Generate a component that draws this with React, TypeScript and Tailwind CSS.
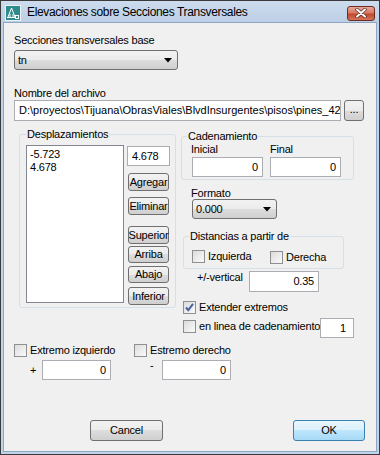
import React from "react";

const face =
  "flex items-center border border-[#707070] rounded-[3px] bg-[linear-gradient(to_bottom,#f2f2f2_0%,#ebebeb_50%,#dddddd_50%,#cfcfcf_100%)] whitespace-nowrap";
const btn = `${face} justify-center`;

const input = "border border-[#abadb3] bg-white h-[20px] leading-[18px] whitespace-nowrap overflow-hidden";

function Check({ checked = false }: { checked?: boolean }) {
  return (
    <span className="relative flex h-[13px] w-[13px] shrink-0 items-center justify-center border border-[#8e8f8f] bg-[linear-gradient(135deg,#dcdcdc_0%,#fafafa_100%)]">
      {checked && (
        <svg width="11" height="11" viewBox="0 0 11 11" className="absolute left-[0px] top-[0px]">
          <path d="M2 5.5 L4.3 8.2 L9 1.8" fill="none" stroke="#4c61a0" strokeWidth="2" />
        </svg>
      )}
    </span>
  );
}

function Combo({ value, w }: { value: string; w: string }) {
  return (
    <div className={`${face} ${w} h-[20px] justify-between pl-[3px] pr-[5px]`}>
      <span>{value}</span>
      <svg width="8" height="5" viewBox="0 0 8 5">
        <path d="M0 0 H8 L4 4.5 Z" fill="#000" />
      </svg>
    </div>
  );
}

function AppIcon() {
  return (
    <svg width="16" height="16" viewBox="0 0 16 16">
      <rect x="0.5" y="0.5" width="15" height="15" fill="#2d8b8b" stroke="#e8f2f2" />
      <path d="M3 12 L6.5 3 L10 12 M5 12 V9 M8 12 V9 M2 12.5 H11" fill="none" stroke="#fff" strokeWidth="1" />
      <rect x="10.5" y="10.5" width="3" height="3" fill="none" stroke="#fff" />
    </svg>
  );
}

export default function App() {
  return (
    <div className="flex h-[455px] w-[380px] flex-col border border-[#3a3a3a] bg-[#bfd3ea] font-['Liberation_Sans',Arial,sans-serif] text-[11px] leading-[13px] tracking-[-0.2px] text-black">
      <div className="flex h-[21px] shrink-0 items-center bg-[linear-gradient(to_bottom,#cddcee,#bccfe6)]">
        <div className="ml-[4px] mt-[2px]">
          <AppIcon />
        </div>
        <span className="ml-[6px] mt-[1px] text-[12px] tracking-[-0.35px]">
          Elevaciones sobre Secciones Transversales
        </span>
        <div className="ml-auto mr-[4px] mt-[3px] flex h-[15px] w-[28px] items-center justify-center rounded-[3px] border border-[#6e2b22] bg-[linear-gradient(to_bottom,#e8a898_0%,#d87a65_45%,#c2472e_55%,#d2765c_100%)]">
          <svg width="12" height="10" viewBox="0 0 12 10">
            <path d="M2 1.5 L10 8.5 M10 1.5 L2 8.5" stroke="#5a2a24" strokeWidth="3.4" strokeLinecap="round" />
            <path d="M2 1.5 L10 8.5 M10 1.5 L2 8.5" stroke="#fff" strokeWidth="2" strokeLinecap="round" />
          </svg>
        </div>
      </div>

      <div className="mx-[2px] mb-[2px] flex-1 border border-[#8fa6c2] bg-[#f0f0f0] pl-[10px]">
        <div className="mt-[11px]">Secciones transversales base</div>
        <div className="mt-[3px]">
          <Combo value="tn" w="w-[164px]" />
        </div>

        <div className="mt-[17px]">Nombre del archivo</div>
        <div className="mt-[0px] flex gap-[3px]">
          <div className={`${input} h-[21px] w-[327px] pl-[4px] leading-[19px] tracking-normal`}>
            {"D:\\proyectos\\Tijuana\\ObrasViales\\BlvdInsurgentes\\pisos\\pines_42"}
          </div>
          <div className={`${btn} h-[21px] w-[20px] pb-[3px]`}>...</div>
        </div>

        <div className="mt-[7px] flex">
          <fieldset className="ml-[5px] h-[180px] w-[157px] rounded-[3px] border border-[#d5dfe5] pl-[6px] pt-[4px]">
            <legend className="px-[1px]">Desplazamientos</legend>
            <div className="flex">
              <div className="h-[158px] w-[98px] border border-[#828790] bg-white pl-[3px] pt-[2px]">
                <div>-5.723</div>
                <div>4.678</div>
              </div>
              <div className="ml-[3px] flex flex-col">
                <div className={`${input} mt-[1px] h-[19px] w-[43px] pl-[4px] leading-[17px]`}>4.678</div>
                <div className={`${btn} ml-[1px] mt-[7px] h-[18px] w-[41px]`}>Agregar</div>
                <div className={`${btn} ml-[1px] mt-[6px] h-[18px] w-[41px]`}>Eliminar</div>
                <div className={`${btn} ml-[1px] mt-[11px] h-[18px] w-[41px]`}>Superior</div>
                <div className={`${btn} ml-[1px] mt-[2px] h-[17px] w-[41px]`}>Arriba</div>
                <div className={`${btn} ml-[1px] mt-[3px] h-[17px] w-[41px]`}>Abajo</div>
                <div className={`${btn} ml-[1px] mt-[4px] h-[18px] w-[41px]`}>Inferior</div>
              </div>
            </div>
          </fieldset>

          <div className="ml-[5px] mt-[2px] flex w-[173px] flex-col">
            <fieldset className="h-[50px] rounded-[3px] border border-[#d5dfe5] pl-[10px]">
              <legend className="-ml-[5px] px-[1px]">Cadenamiento</legend>
              <div className="flex gap-[7px]">
                <div className="flex flex-col">
                  <span className="-ml-[1px]">Inicial</span>
                  <div className={`${input} mt-[1px] w-[71px] pr-[4px] text-right`}>0</div>
                </div>
                <div className="flex flex-col">
                  <span>Final</span>
                  <div className={`${input} mt-[1px] w-[71px] pr-[4px] text-right`}>0</div>
                </div>
              </div>
            </fieldset>

            <div className="ml-[10px] mt-[7px]">Formato</div>
            <div className="ml-[11px] mt-[-1px]">
              <Combo value="0.000" w="w-[85px]" />
            </div>

            <fieldset className="ml-[2px] mt-[11px] h-[39px] w-[161px] rounded-[3px] border border-[#d5dfe5] pl-[8px] pt-[6px]">
              <legend className="-ml-[3px] px-[1px]">Distancias a partir de</legend>
              <div className="flex">
                <div className="flex w-[78px] items-center gap-[3px]">
                  <Check />
                  <span>Izquierda</span>
                </div>
                <div className="mt-[2px] flex items-center gap-[3px]">
                  <Check />
                  <span>Derecha</span>
                </div>
              </div>
            </fieldset>

            <div className="ml-[16px] mt-[2px] flex items-start">
              <span className="w-[52px]">+/-vertical</span>
              <div className={`${input} h-[21px] w-[70px] pr-[4px] text-right leading-[19px]`}>0.35</div>
            </div>

            <div className="ml-[2px] mt-[9px] flex items-center gap-[3px]">
              <Check checked />
              <span>Extender extremos</span>
            </div>
            <div className="ml-[2px] mt-[4px] flex items-start">
              <div className="mt-[2px] flex w-[140px] items-center gap-[3px] whitespace-nowrap">
                <Check />
                <span>en linea de cadenamiento</span>
              </div>
              <div className={`${input} w-[35px] pr-[7px] text-right`}>1</div>
            </div>
          </div>
        </div>

        <div className="mt-[6px] flex">
          <div className="flex w-[120px] flex-col">
            <div className="flex items-center gap-[3px]">
              <Check />
              <span>Extremo izquierdo</span>
            </div>
            <div className="ml-[16px] mt-[3px] flex items-center">
              <span className="w-[12px]">+</span>
              <div className={`${input} w-[69px] pr-[4px] text-right`}>0</div>
            </div>
          </div>
          <div className="flex flex-col">
            <div className="flex items-center gap-[3px]">
              <Check />
              <span>Estremo derecho</span>
            </div>
            <div className="ml-[16px] mt-[3px] flex items-start">
              <span className="mt-[-1px] w-[12px]">-</span>
              <div className={`${input} w-[69px] pr-[4px] text-right`}>0</div>
            </div>
          </div>
        </div>

        <div className="mt-[40px] flex">
          <div className={`${btn} ml-[76px] h-[21px] w-[73px]`}>Cancel</div>
          <div className="ml-[130px] flex h-[21px] w-[72px] items-center justify-center rounded-[3px] border border-[#3c7fb1] bg-[linear-gradient(to_bottom,#eaf6fd_0%,#d9f0fc_50%,#bee6fd_50%,#a7d9f5_100%)]">
            OK
          </div>
        </div>
      </div>
    </div>
  );
}
